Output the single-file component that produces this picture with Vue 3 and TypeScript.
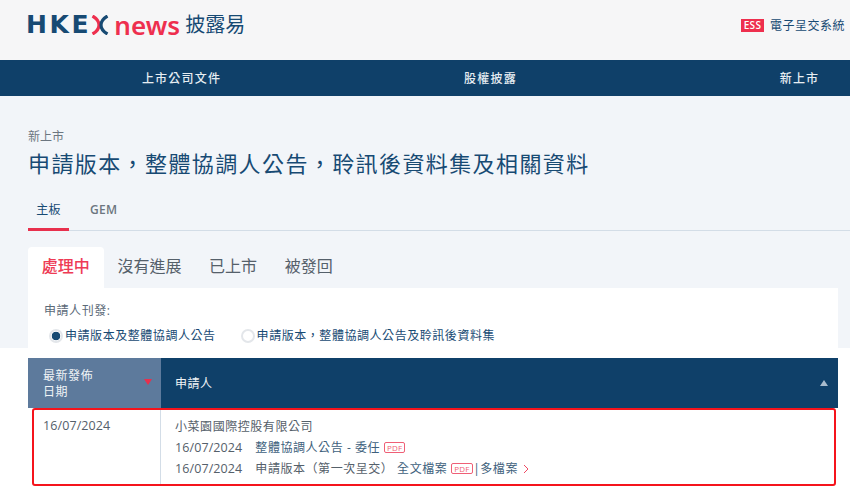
<script setup lang="ts">
const navItems: string[] = ['上市公司文件', '股權披露', '新上市']
const tabs: string[] = ['處理中', '沒有進展', '已上市', '被發回']
</script>

<template>
  <div class="page" lang="zh-TW">
    <header class="top">
      <div class="logo">
        <span class="hke">HKE</span>
        <svg class="x" width="18" height="20" viewBox="0 0 18 20" fill="none">
          <path d="M1.5 1 C6 3.5 8 7 8 10 C8 13 6 16.5 1.5 19" stroke="#ee2f4e" stroke-width="3.2" />
          <path d="M16.5 1 C12 3.5 10 7 10 10 C10 13 12 16.5 16.5 19" stroke="#174a73" stroke-width="3.2" />
        </svg>
        <span class="news">news</span>
        <span class="zh">披露易</span>
      </div>
      <div class="ess"><span class="ess-badge">ESS</span><span class="ess-text">電子呈交系統</span></div>
    </header>
    <nav class="nav">
      <span v-for="n in navItems" :key="n" class="nav-item">{{ n }}</span>
    </nav>
    <main class="main">
      <div class="crumb">新上市</div>
      <h1 class="title">申請版本，整體協調人公告，聆訊後資料集及相關資料</h1>
      <div class="board">
        <span class="board-item active">主板</span>
        <span class="board-item gem">GEM</span>
      </div>
      <div class="tabs">
        <span v-for="(t, i) in tabs" :key="t" class="tab" :class="{ on: i === 0 }">{{ t }}</span>
      </div>
      <section class="panel">
        <div class="label">申請人刊發:</div>
        <div class="radios">
          <span class="radio"><i class="dot checked"></i>申請版本及整體協調人公告</span>
          <span class="radio second"><i class="dot"></i>申請版本，整體協調人公告及聆訊後資料集</span>
        </div>
      </section>
    </main>
    <section class="table">
      <div class="thead">
        <div class="th first">
          <span>最新發佈<br />日期</span>
          <i class="tri red"></i>
        </div>
        <div class="th second-col">
          <span>申請人</span>
          <i class="tri up"></i>
        </div>
      </div>
      <div class="tbody">
        <div class="td first"><span class="date-plain">16/07/2024</span></div>
        <div class="td second-col">
          <div class="line name">小菜園國際控股有限公司</div>
          <div class="line"><span class="date">16/07/2024</span><span class="link">整體協調人公告 - 委任</span><span class="pdf">PDF</span></div>
          <div class="line"><span class="date">16/07/2024</span><span>申請版本（第一次呈交） </span><span class="link">全文檔案</span><span class="pdf">PDF</span><span class="sep">|</span><span class="link">多檔案</span><svg class="chev" width="6" height="10" viewBox="0 0 6 10" fill="none"><path d="M1 1 L5 5 L1 9" stroke="#ef4a63" stroke-width="1" /></svg></div>
        </div>
      </div>
      <div class="mark"></div>
    </section>
  </div>
</template>

<style scoped>
.page {
  width: 850px;
  height: 488px;
  overflow: hidden;
  background: #fff;
  font-family: "Open Sans", "Noto Sans CJK TC", sans-serif;
  color: #3d4a56;
}
.top {
  height: 60px;
  background: #f6f6f7;
  display: flex;
  align-items: center;
  justify-content: space-between;
  padding: 0 5px 12px 26px;
  box-sizing: border-box;
}
.logo {
  display: flex;
  align-items: center;
  padding-top: 2px;
}
.hke {
  font-family: "DejaVu Sans", sans-serif;
  font-size: 25px;
  font-weight: 700;
  letter-spacing: 2.6px;
  color: #174a73;
  line-height: 24px;
}
.x {
  margin-left: 0;
}
.news {
  margin-left: 5px;
  font-size: 26px;
  font-weight: 600;
  letter-spacing: 0.1px;
  color: #ee2f4e;
  line-height: 24px;
  font-family: "Noto Sans", sans-serif;
}
.zh {
  margin-left: 5px;
  font-size: 20px;
  color: #174a73;
  line-height: 24px;
}
.ess {
  display: flex;
  align-items: center;
  font-size: 12px;
  letter-spacing: 0.5px;
  color: #174a73;
  padding-top: 2px;
}
.ess-badge {
  background: #ee2f4e;
  color: #fff;
  font-size: 10px;
  font-weight: 600;
  width: 23px;
  height: 13px;
  line-height: 13px;
  text-align: center;
  margin-right: 6px;
  letter-spacing: 0.3px;
}
.nav {
  height: 36px;
  background: #0f4069;
  display: grid;
  grid-template-columns: repeat(3, 309px);
  padding-left: 27px;
  align-items: center;
  justify-items: center;
  color: #e6edf2;
  font-size: 12px;
  font-weight: 500;
  letter-spacing: 1.2px;
  overflow: hidden;
}
.main {
  height: 252px;
  background: #f2f5f9;
  padding: 0 12px 0 28px;
  display: flex;
  flex-direction: column;
}
.crumb {
  margin-top: 33px;
  font-size: 12px;
  line-height: 16px;
  color: #6c7680;
}
.title {
  margin: 3px 0 0;
  font-size: 22px;
  font-weight: 400;
  line-height: 30px;
  color: #174a73;
  letter-spacing: 1.4px;
  white-space: nowrap;
}
.board {
  margin-top: 20px;
  height: 32px;
  display: flex;
  border-bottom: 1px solid #d3dde7;
  margin-right: -12px;
}
.board-item {
  font-size: 12px;
  line-height: 24px;
  height: 32px;
  box-sizing: border-box;
  color: #174a73;
  letter-spacing: 0.3px;
}
.board-item.active {
  width: 41px;
  text-align: center;
  border-bottom: 3px solid #e8304d;
  height: 33px;
}
.board-item.gem {
  margin-left: 21px;
  font-weight: 600;
  color: #6c7680;
}
.tabs {
  margin-top: 16px;
  height: 41px;
  display: flex;
}
.tab {
  padding: 0 13.8px;
  box-sizing: border-box;
  font-size: 16px;
  line-height: 38px;
  color: #55606a;
  white-space: nowrap;
}
.tab.on {
  background: #fff;
  color: #ee3b55;
  border-radius: 4px 4px 0 0;
  font-weight: 500;
}
.panel {
  flex: 1;
  background: #fff;
  padding: 0 16px;
  margin-bottom: -10px;
  position: relative;
  letter-spacing: 0.55px;
}
.label {
  margin-top: 15px;
  font-size: 12px;
  line-height: 16px;
  color: #5b6a78;
}
.radios {
  display: flex;
  margin-top: 9px;
  font-size: 12px;
  line-height: 16px;
  color: #174a73;
  align-items: center;
}
.radio {
  display: flex;
  align-items: center;
}
.radio.second {
  margin-left: 25px;
}
.dot {
  width: 14px;
  height: 14px;
  border-radius: 50%;
  border: 2px solid #e3e6ea;
  background: #fff;
  box-sizing: border-box;
  margin: 0 2px 0 0;
  flex: none;
}
.radio:first-child {
  margin-left: 5px;
}
.dot.checked {
  background: radial-gradient(circle, #174a73 0 4px, #fff 4.6px);
}
.table {
  position: relative;
  margin: 10px 12px 0 28px;
  font-size: 12px;
  letter-spacing: 0.55px;
}
.thead {
  display: flex;
  height: 50px;
  background: #0f4069;
  color: #f0f4f7;
}
.th {
  display: flex;
  align-items: center;
  line-height: 16px;
  position: relative;
  box-sizing: border-box;
  padding-top: 2px;
}
.first {
  width: 133px;
  flex: none;
  padding-left: 15px;
}
.th.first {
  background: #5d7a9c;
}
.second-col {
  flex: 1;
  padding-left: 14px;
}
.tri {
  position: absolute;
  width: 0;
  height: 0;
  border-left: 4px solid transparent;
  border-right: 4px solid transparent;
}
.tri.red {
  right: 9px;
  top: 21px;
  border-top: 6px solid #e8304d;
}
.tri.up {
  right: 10px;
  top: 22px;
  border-bottom: 6px solid #a9bccd;
}
.tbody {
  display: flex;
  height: 78px;
  color: #55606a;
}
.td.first {
  padding-top: 9px;
  line-height: 18px;
  border-right: 1px solid #d3dde7;
  box-sizing: border-box;
}
.td.second-col {
  padding-top: 8px;
}
.date-plain,
.date {
  font-size: 12.5px;
  letter-spacing: 0.1px;
}
.line {
  height: 21px;
  line-height: 21px;
  white-space: pre;
  display: flex;
  align-items: center;
}
.date {
  margin-right: 13px;
}
.link {
  color: #3e5f7c;
}
.pdf {
  margin-left: 4px;
  border: 1px solid #ef5f76;
  border-radius: 2px;
  color: #ef5f76;
  font-size: 8px;
  line-height: 9px;
  height: 9px;
  padding: 0 2px;
  letter-spacing: 0.2px;
}
.sep {
  margin: 0 0 0 0.5px;
  color: #3e5f7c;
}
.chev {
  margin-left: 5px;
}
.mark {
  position: absolute;
  left: 4px;
  top: 50px;
  width: 804px;
  height: 78px;
  box-sizing: border-box;
  border: 2.5px solid #f5141c;
  border-radius: 3px;
}
</style>
